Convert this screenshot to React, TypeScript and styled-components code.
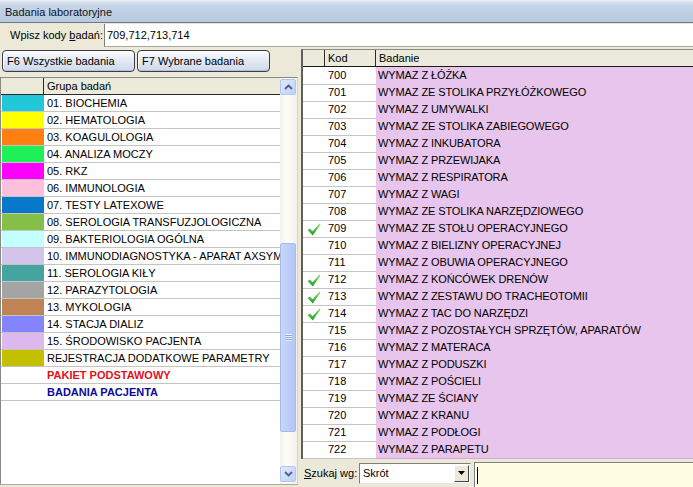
import React from "react";
import styled, { createGlobalStyle } from "styled-components";

const Global = createGlobalStyle`
  html, body { margin: 0; padding: 0; overflow: hidden; }
  body { background: #ece9d8; font-family: "Liberation Sans", Arial, sans-serif; font-size: 11px; color: #000; }
  * { box-sizing: border-box; }
`;

const Window = styled.div`
  width: 693px;
  height: 487px;
  display: flex;
  flex-direction: column;
  background: #ece9d8;
  overflow: hidden;
`;

const TitleBar = styled.div`
  height: 23px;
  flex: none;
  display: flex;
  align-items: center;
  padding: 1px 0 0 5px;
  background: linear-gradient(to bottom, #eef2f8 0px, #dbe4f0 2px, #c6d5e9 5px, #b6c9e0 100%);
  border-bottom: 1px solid #6f7780;
  color: #111;
  font-size: 11px;
`;

const CodeRow = styled.div`
  height: 26px;
  flex: none;
  display: flex;
  align-items: flex-start;
  padding-top: 1px;
`;

const CodeLabel = styled.label`
  width: 104px;
  flex: none;
  padding-left: 10px;
  line-height: 22px;
  u { text-decoration: underline; }
`;

const CodeInput = styled.input`
  flex: 1;
  height: 23px;
  border: none;
  border-left: 1px solid #7f7f7f;
  border-bottom: 1px solid #a8a8a0;
  background: #fff;
  font-family: "Liberation Sans", Arial, sans-serif;
  font-size: 11px;
  padding: 0 2px;
  outline: none;
  color: #000;
`;

const Body = styled.div`
  flex: 1;
  display: flex;
  gap: 3px;
  min-height: 0;
`;

const LeftCol = styled.div`
  width: 298px;
  flex: none;
  display: flex;
  flex-direction: column;
  padding: 1px 0 2px 0;
  gap: 5px;
`;

const ButtonRow = styled.div`
  display: flex;
  gap: 2px;
  padding-left: 2px;
  height: 22px;
  flex: none;
`;

const TabButton = styled.button`
  width: 133px;
  height: 22px;
  border: 1px solid #3a3d45;
  border-radius: 4px;
  background: linear-gradient(to bottom, #fbfcfe 0%, #e4eaf4 45%, #cdd8ea 100%);
  box-shadow: inset 0 -1px 0 #b4c2da, inset 1px 0 0 #fff;
  font-family: "Liberation Sans", Arial, sans-serif;
  font-size: 11px;
  text-align: left;
  padding: 0 0 0 4px;
  color: #000;
`;

const GroupGrid = styled.div`
  flex: 1;
  display: flex;
  border: 1px solid #8a8a84;
  border-right-color: #d6d3c6;
  border-bottom-color: #a9a69a;
  background: #fff;
  min-height: 0;
`;

const GridMain = styled.div`
  flex: 1;
  display: flex;
  flex-direction: column;
  overflow: hidden;
  background: #fff;
`;

const GroupHeader = styled.div`
  display: grid;
  grid-template-columns: 43px 1fr;
  height: 17px;
  flex: none;
  background: #ebeadb;
  border-bottom: 1px solid #2a2a2a;
  & > div:first-child { border-right: 1px solid #2a2a2a; }
  & > div { padding-left: 3px; line-height: 16px; }
`;

const GroupRow = styled.div`
  display: grid;
  grid-template-columns: 43px 1fr;
  height: 17px;
  flex: none;
  border-bottom: 1px solid #c4c4c0;
`;

const Swatch = styled.div<{ $c?: string }>`
  background: ${(p) => p.$c || "transparent"};
  margin: 0 0 0 1px;
`;

const GroupName = styled.div<{ $color?: string; $bold?: boolean }>`
  padding-left: 3px;
  line-height: 17px;
  white-space: nowrap;
  overflow: hidden;
  color: ${(p) => p.$color || "#000"};
  font-weight: ${(p) => (p.$bold ? 700 : 400)};
`;

const VScroll = styled.div`
  width: 17px;
  flex: none;
  display: flex;
  flex-direction: column;
  background: linear-gradient(to right, #f3f1ea, #fefefb 40%, #f3f1ea);
  padding: 1px 1px 2px 0;
`;

const ScrollBtn = styled.div`
  height: 16px;
  flex: none;
  border: 1px solid #b3c6f0;
  border-radius: 2px;
  background: linear-gradient(to bottom right, #dfe8fd, #bfd1f8);
  display: flex;
  align-items: center;
  justify-content: center;
`;

const ScrollTrack = styled.div`
  flex: 1;
  display: flex;
  flex-direction: column;
  padding: 148px 0 34px 0;
`;

const Thumb = styled.div`
  flex: 1;
  border: 1px solid #a5bbe8;
  border-radius: 2px;
  background: linear-gradient(to right, #c7d7fb, #bccefa 50%, #b3c6f5);
  display: flex;
  align-items: center;
  justify-content: center;
`;

const Grip = styled.div`
  width: 7px;
  height: 7px;
  background: repeating-linear-gradient(to bottom, #eef3fe 0px, #eef3fe 1px, #8ea6dc 1px, #8ea6dc 2px);
`;

const RightCol = styled.div`
  flex: 1;
  display: flex;
  flex-direction: column;
  min-width: 0;
`;

const TestGrid = styled.div`
  height: 410px;
  flex: none;
  display: flex;
  flex-direction: column;
  border-top: 1px solid #8a8a84;
  border-left: 2px solid #5e5e5a;
  background: #fff;
  overflow: hidden;
`;

const TestHeader = styled.div`
  display: grid;
  grid-template-columns: 22px 51px 1fr;
  height: 17px;
  flex: none;
  background: #ebeadb;
  border-bottom: 1px solid #1a1a1a;
  & > div { padding-left: 3px; line-height: 16px; }
  & > div:not(:last-child) { border-right: 1px solid #2a2a2a; }
`;

const TestRow = styled.div`
  display: grid;
  grid-template-columns: 22px 51px 1fr;
  height: 17px;
  flex: none;
`;

const Mark = styled.div`
  border-bottom: 1px solid #c4c4c0;
  display: flex;
  align-items: center;
  justify-content: center;
  padding-top: 1px;
`;

const Code = styled.div`
  border-bottom: 1px solid #c4c4c0;
  padding-left: 3px;
  line-height: 17px;
`;

const TestName = styled.div`
  background: #e8c5ec;
  border-bottom: 1px solid #d4a9d8;
  padding-left: 2px;
  line-height: 17px;
  white-space: nowrap;
  overflow: hidden;
  letter-spacing: -0.1px;
`;

const SearchBar = styled.div`
  flex: 1;
  display: flex;
  align-items: center;
  padding-left: 3px;
`;

const SearchLabel = styled.label`
  width: 55px;
  flex: none;
  u { text-decoration: underline; }
`;

const Select = styled.div`
  width: 112px;
  height: 21px;
  flex: none;
  display: flex;
  align-items: center;
  background: #fff;
  border: 1px solid #7f7f7f;
  border-right-color: #e6e6e0;
  border-bottom-color: #e6e6e0;
  padding: 1px;
`;

const SelectText = styled.div`
  flex: 1;
  padding-left: 2px;
`;

const DropBtn = styled.div`
  width: 15px;
  height: 17px;
  background: #ece9d8;
  border: 1px solid;
  border-color: #fff #404040 #404040 #fff;
  display: flex;
  align-items: center;
  justify-content: center;
`;

const SearchInput = styled.div`
  flex: 1;
  align-self: stretch;
  margin: 3px 0 0 3px;
  background: #fffee3;
  border-left: 1px solid #7f7f7f;
  border-top: 1px solid #7f7f7f;
  display: flex;
  align-items: center;
  padding-left: 2px;
`;

const Caret = styled.div`
  width: 1px;
  height: 17px;
  background: #000;
`;

const Chevron = ({ up }: { up?: boolean }) => (
  <svg width="9" height="6" viewBox="0 0 9 6">
    <path
      d={up ? "M1 5 L4.5 1.5 L8 5" : "M1 1 L4.5 4.5 L8 1"}
      fill="none"
      stroke="#4d6185"
      strokeWidth="1.8"
    />
  </svg>
);

const Check = () => (
  <svg width="14" height="13" viewBox="0 0 14 13">
    <defs>
      <linearGradient id="ck" x1="0" y1="0" x2="0" y2="1">
        <stop offset="0" stopColor="#8fe07f" />
        <stop offset="1" stopColor="#1f9a24" />
      </linearGradient>
    </defs>
    <polygon points="0.5,7 3,5.5 5.5,8.3 12.5,0.5 13.5,1.5 5.8,12.5" fill="url(#ck)" />
  </svg>
);

const groups: { name: string; color?: string; text?: string; bold?: boolean }[] = [
  { name: "01. BIOCHEMIA", color: "#22c8d8" },
  { name: "02. HEMATOLOGIA", color: "#ffff00" },
  { name: "03. KOAGULOLOGIA", color: "#ff7f10" },
  { name: "04. ANALIZA MOCZY", color: "#20f058" },
  { name: "05. RKZ", color: "#ff00ff" },
  { name: "06. IMMUNOLOGIA", color: "#fcc0dc" },
  { name: "07. TESTY LATEXOWE", color: "#0a78c8" },
  { name: "08. SEROLOGIA TRANSFUZJOLOGICZNA", color: "#84c048" },
  { name: "09. BAKTERIOLOGIA OGÓLNA", color: "#c4ffff" },
  { name: "10. IMMUNODIAGNOSTYKA - APARAT AXSYM", color: "#d4c4ec" },
  { name: "11. SEROLOGIA KIŁY", color: "#44a4a0" },
  { name: "12. PARAZYTOLOGIA", color: "#a4a4a4" },
  { name: "13. MYKOLOGIA", color: "#c08454" },
  { name: "14. STACJA DIALIZ", color: "#8484ff" },
  { name: "15. ŚRODOWISKO PACJENTA", color: "#dcb8ec" },
  { name: "REJESTRACJA DODATKOWE PARAMETRY", color: "#c4c000" },
  { name: "PAKIET PODSTAWOWY", text: "#e0101c", bold: true },
  { name: "BADANIA PACJENTA", text: "#0a0a9c", bold: true },
];

const tests: [string, string, boolean][] = [
  ["700", "WYMAZ Z ŁÓŻKA", false],
  ["701", "WYMAZ ZE STOLIKA PRZYŁÓŻKOWEGO", false],
  ["702", "WYMAZ Z UMYWALKI", false],
  ["703", "WYMAZ ZE STOLIKA ZABIEGOWEGO", false],
  ["704", "WYMAZ Z INKUBATORA", false],
  ["705", "WYMAZ Z PRZEWIJAKA", false],
  ["706", "WYMAZ Z RESPIRATORA", false],
  ["707", "WYMAZ Z WAGI", false],
  ["708", "WYMAZ ZE STOLIKA NARZĘDZIOWEGO", false],
  ["709", "WYMAZ ZE STOŁU OPERACYJNEGO", true],
  ["710", "WYMAZ Z BIELIZNY OPERACYJNEJ", false],
  ["711", "WYMAZ Z OBUWIA OPERACYJNEGO", false],
  ["712", "WYMAZ Z KOŃCÓWEK DRENÓW", true],
  ["713", "WYMAZ Z ZESTAWU DO TRACHEOTOMII", true],
  ["714", "WYMAZ Z TAC DO NARZĘDZI", true],
  ["715", "WYMAZ Z POZOSTAŁYCH SPRZĘTÓW, APARATÓW", false],
  ["716", "WYMAZ Z MATERACA", false],
  ["717", "WYMAZ Z PODUSZKI", false],
  ["718", "WYMAZ Z POŚCIELI", false],
  ["719", "WYMAZ ZE ŚCIANY", false],
  ["720", "WYMAZ Z KRANU", false],
  ["721", "WYMAZ Z PODŁOGI", false],
  ["722", "WYMAZ Z PARAPETU", false],
];

export default function App() {
  return (
    <Window>
      <Global />
      <TitleBar>Badania laboratoryjne</TitleBar>
      <CodeRow>
        <CodeLabel>
          Wpisz kody <u>b</u>adań:
        </CodeLabel>
        <CodeInput readOnly value="709,712,713,714" />
      </CodeRow>
      <Body>
        <LeftCol>
          <ButtonRow>
            <TabButton>F6 Wszystkie badania</TabButton>
            <TabButton>F7 Wybrane badania</TabButton>
          </ButtonRow>
          <GroupGrid>
            <GridMain>
              <GroupHeader>
                <div />
                <div>Grupa badań</div>
              </GroupHeader>
              {groups.map((g) => (
                <GroupRow key={g.name}>
                  <Swatch $c={g.color} />
                  <GroupName $color={g.text} $bold={g.bold}>
                    {g.name}
                  </GroupName>
                </GroupRow>
              ))}
            </GridMain>
            <VScroll>
              <ScrollBtn>
                <Chevron up />
              </ScrollBtn>
              <ScrollTrack>
                <Thumb>
                  <Grip />
                </Thumb>
              </ScrollTrack>
              <ScrollBtn>
                <Chevron />
              </ScrollBtn>
            </VScroll>
          </GroupGrid>
        </LeftCol>
        <RightCol>
          <TestGrid>
            <TestHeader>
              <div />
              <div>Kod</div>
              <div>Badanie</div>
            </TestHeader>
            {tests.map(([code, name, checked]) => (
              <TestRow key={code}>
                <Mark>{checked && <Check />}</Mark>
                <Code>{code}</Code>
                <TestName>{name}</TestName>
              </TestRow>
            ))}
          </TestGrid>
          <SearchBar>
            <SearchLabel>
              <u>S</u>zukaj wg:
            </SearchLabel>
            <Select>
              <SelectText>Skrót</SelectText>
              <DropBtn>
                <svg width="7" height="4" viewBox="0 0 7 4">
                  <polygon points="0,0 7,0 3.5,4" fill="#000" />
                </svg>
              </DropBtn>
            </Select>
            <SearchInput>
              <Caret />
            </SearchInput>
          </SearchBar>
        </RightCol>
      </Body>
    </Window>
  );
}
